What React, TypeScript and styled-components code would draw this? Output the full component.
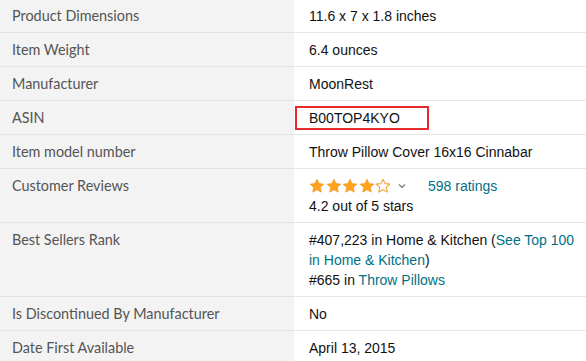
import { createGlobalStyle } from "styled-components";
import styled from "styled-components";

const GlobalStyle = createGlobalStyle`
  html, body {
    margin: 0;
    padding: 0;
    background: #fff;
  }
`

const Table = styled.table`
  width: 586px;
  margin-top: -1px;
  border-collapse: collapse;
  table-layout: fixed;
`

const Row = styled.tr`
  border-bottom: 1px solid #e7e7e7;
`

const Label = styled.th`
  width: 294px;
  box-sizing: border-box;
  background-color: #f3f3f3;
  border-bottom: 1px solid #e3e3e3;
  padding: 7px 12px 6px;
  text-align: left;
  vertical-align: top;
  font-family: Lato, "Open Sans", sans-serif;
  font-weight: 400;
  font-size: 14.4px;
  line-height: 20px;
  color: #555;
`

const Value = styled.td`
  padding: 7px 2px 6px 15px;
  vertical-align: top;
  font-family: "Liberation Sans", Arial, sans-serif;
  font-size: 14px;
  line-height: 20px;
  color: #111;
`

const Highlight = styled.span`
  display: inline-block;
  box-sizing: border-box;
  width: 134px;
  margin: -2px 0 -2px -14px;
  padding-left: 12px;
  border: 2px solid #e8282b;
  line-height: 20px;
`

const Link = styled.a`
  color: #007185;
  text-decoration: none;
`

const RatingLine = styled.div`
  display: flex;
  align-items: center;
  height: 20px;
`

const Stars = styled.div`
  display: flex;
  gap: 0.5px;
`

const Chevron = styled.span`
  display: flex;
  margin: 0 22px 0 7px;
`

const Star = ({ filled }: { filled: boolean }) => (
  <svg width="16" height="16" viewBox="0 0 24 24">
    <path
      d="M12 1.8l3.1 6.6 7.2.8-5.4 4.9 1.5 7.1L12 17.6l-6.4 3.6 1.5-7.1-5.4-4.9 7.2-.8z"
      fill={filled ? "#ffa41c" : "#fff"}
      stroke={filled ? "#f59218" : "#f0a23a"}
      strokeWidth={filled ? 1 : 1.6}
      strokeLinejoin="round"
    />
  </svg>
)

const rows: { label: string; value: string }[] = [
  { label: "Product Dimensions", value: "11.6 x 7 x 1.8 inches" },
  { label: "Item Weight", value: "6.4 ounces" },
  { label: "Manufacturer", value: "MoonRest" },
]

const App = () => {
  return (
    <>
      <GlobalStyle />
      <Table>
        <tbody>
          {rows.map((r) => (
            <Row key={r.label}>
              <Label>{r.label}</Label>
              <Value>{r.value}</Value>
            </Row>
          ))}
          <Row>
            <Label>ASIN</Label>
            <Value><Highlight>B00TOP4KYO</Highlight></Value>
          </Row>
          <Row>
            <Label>Item model number</Label>
            <Value>Throw Pillow Cover 16x16 Cinnabar</Value>
          </Row>
          {/* 리뷰 */}
          <Row>
            <Label>Customer Reviews</Label>
            <Value>
              <RatingLine>
                <Stars>
                  {[1, 2, 3, 4, 5].map((n) => <Star key={n} filled={n <= 4} />)}
                </Stars>
                <Chevron>
                  <svg width="8" height="6" viewBox="0 0 8 6">
                    <path d="M1 1.5l3 3 3-3" fill="none" stroke="#777" strokeWidth="1.2" />
                  </svg>
                </Chevron>
                <Link href="#">598 ratings</Link>
              </RatingLine>
              <div>4.2 out of 5 stars</div>
            </Value>
          </Row>
          <Row>
            <Label>Best Sellers Rank</Label>
            <Value>
              #407,223 in Home &amp; Kitchen (<Link href="#">See Top 100 in Home &amp; Kitchen</Link>)
              <br />
              #665 in <Link href="#">Throw Pillows</Link>
            </Value>
          </Row>
          <Row>
            <Label>Is Discontinued By Manufacturer</Label>
            <Value>No</Value>
          </Row>
          <Row>
            <Label>Date First Available</Label>
            <Value>April 13, 2015</Value>
          </Row>
        </tbody>
      </Table>
    </>
  )
}

export default App;
